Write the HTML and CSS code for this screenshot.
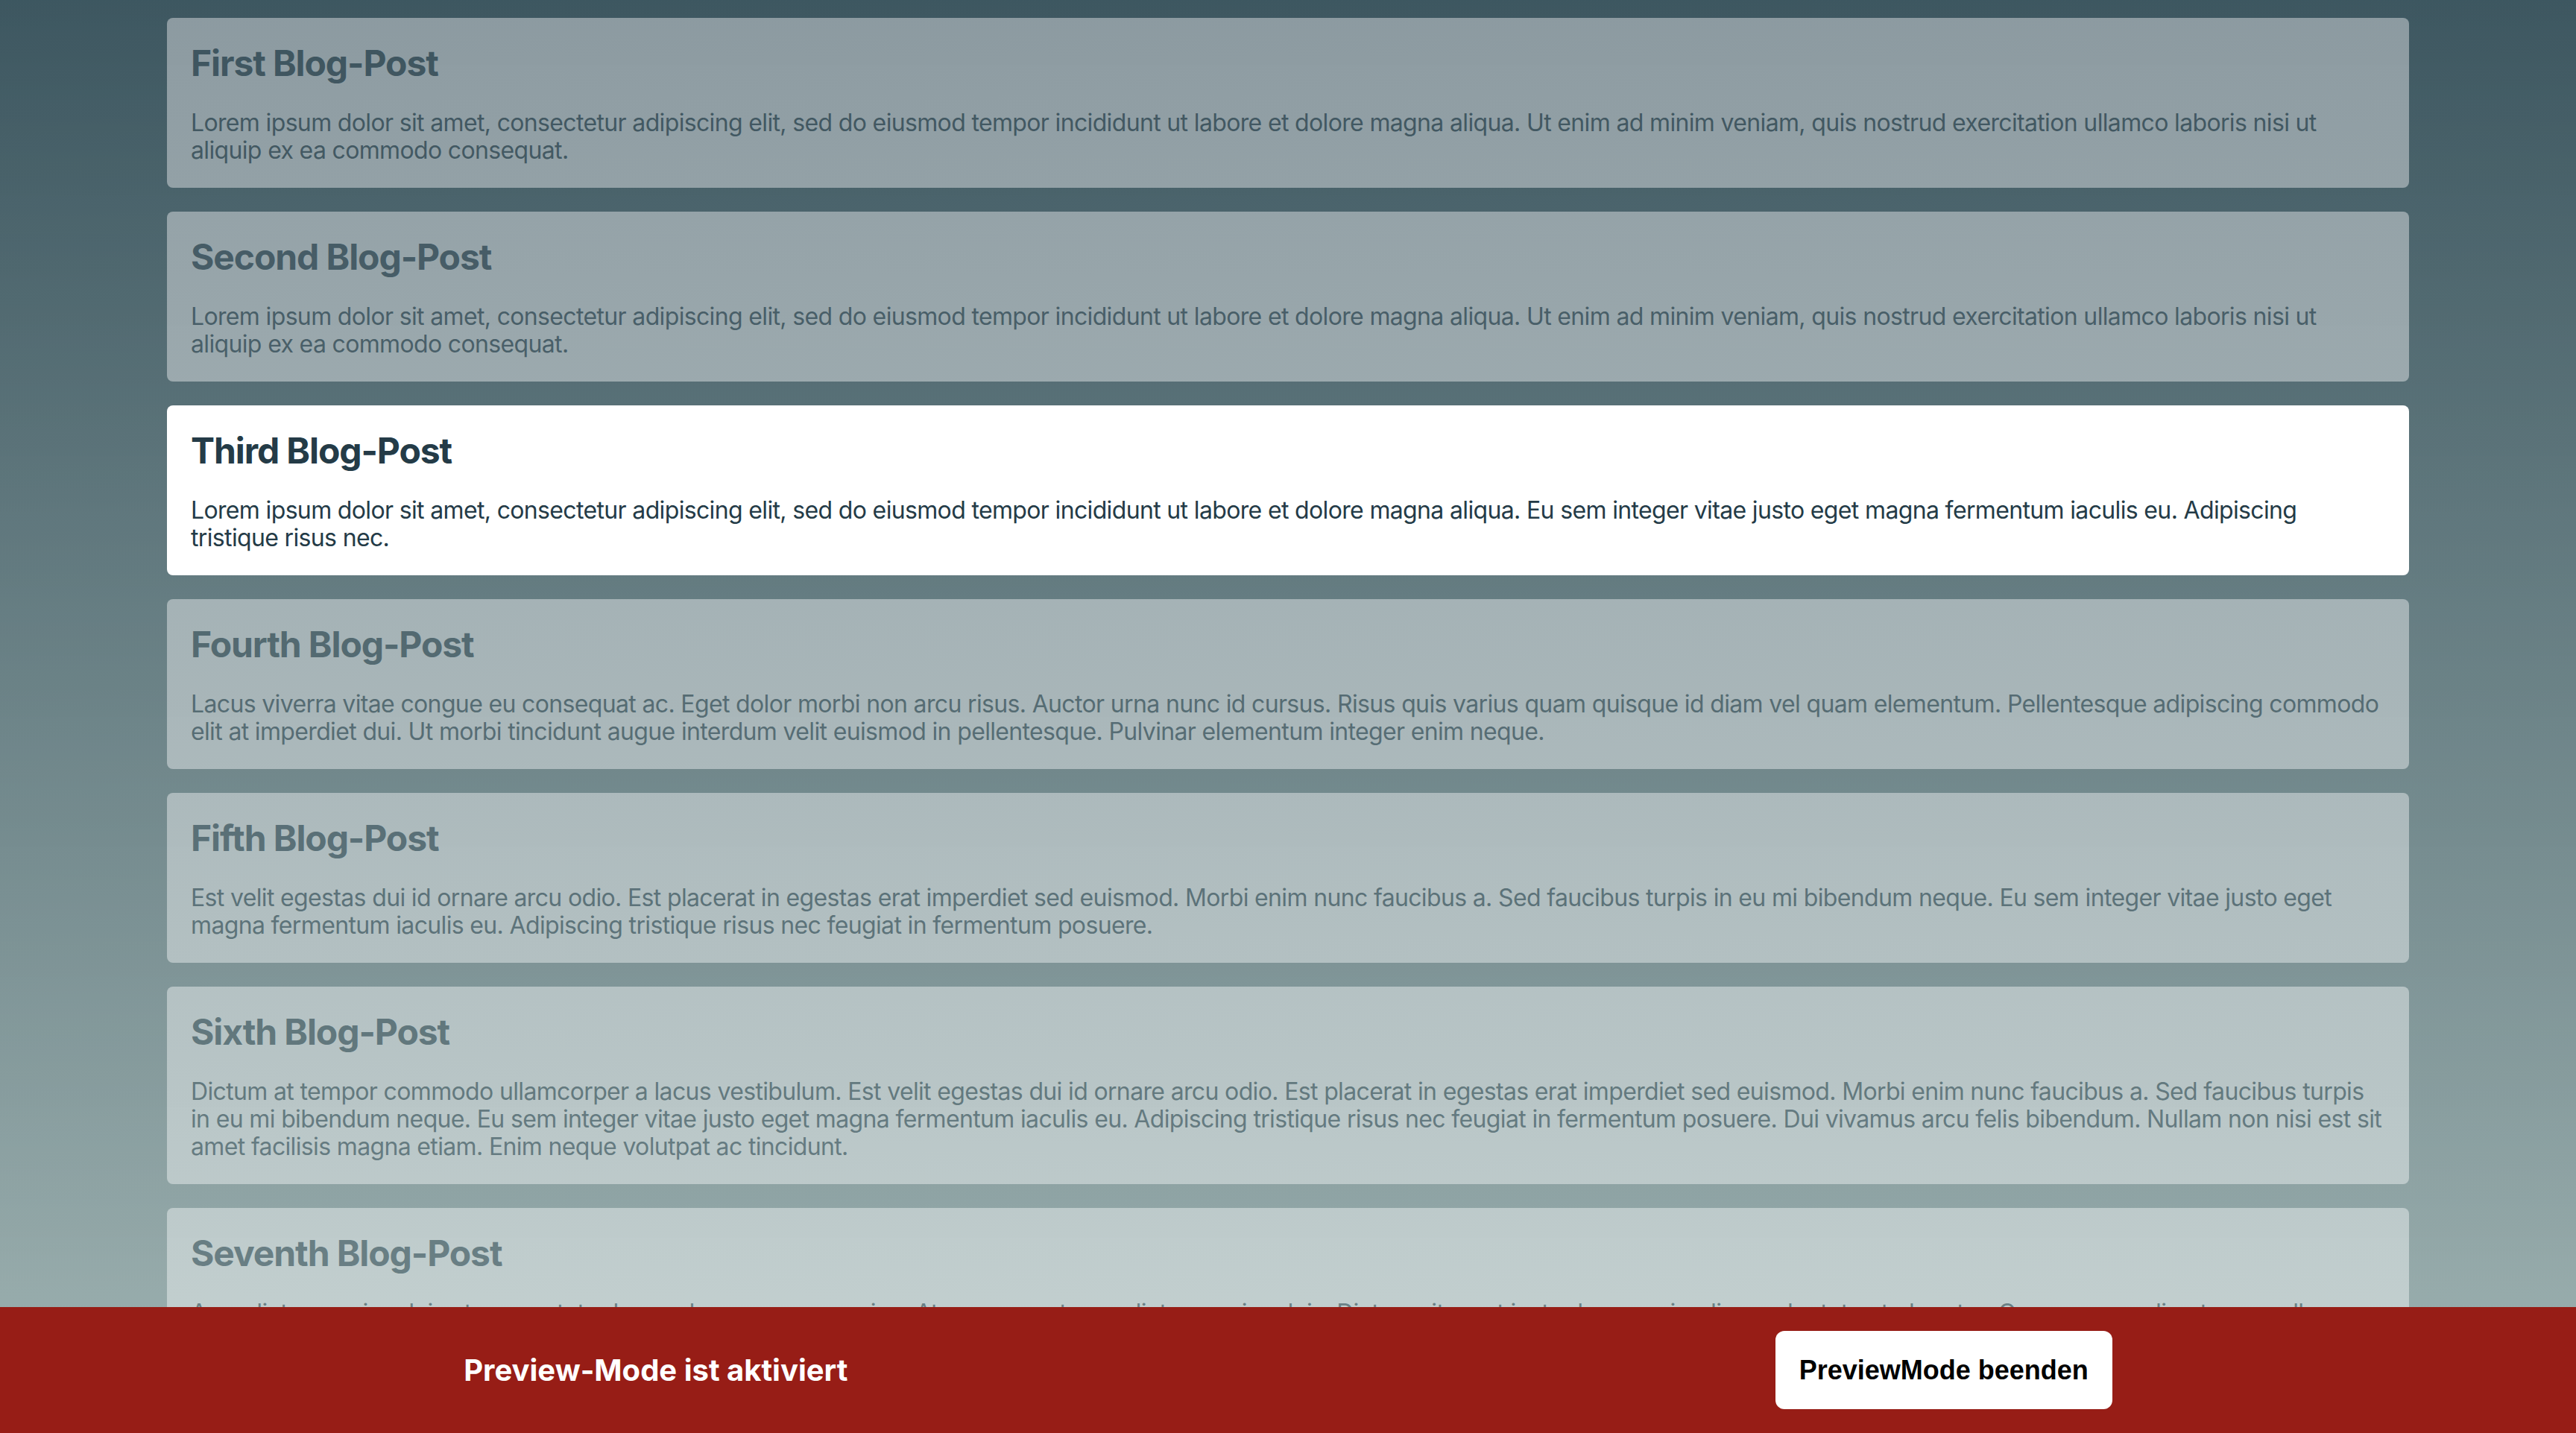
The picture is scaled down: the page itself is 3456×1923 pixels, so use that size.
FILE: index.html
```html
<!DOCTYPE html>
<html lang="de">
<head>
<meta charset="utf-8">
<title>Blog Preview</title>
<link rel="stylesheet" href="styles.css">
</head>
<body>
<main class="posts">
  <article class="post">
    <h2 class="post-title">First Blog-Post</h2>
    <p class="post-text">Lorem ipsum dolor sit amet, consectetur adipiscing elit, sed do eiusmod tempor incididunt ut labore et dolore magna aliqua. Ut enim ad minim veniam, quis nostrud exercitation ullamco laboris nisi ut aliquip ex ea commodo consequat.</p>
  </article>
  <article class="post">
    <h2 class="post-title">Second Blog-Post</h2>
    <p class="post-text">Lorem ipsum dolor sit amet, consectetur adipiscing elit, sed do eiusmod tempor incididunt ut labore et dolore magna aliqua. Ut enim ad minim veniam, quis nostrud exercitation ullamco laboris nisi ut aliquip ex ea commodo consequat.</p>
  </article>
  <article class="post post-active">
    <h2 class="post-title">Third Blog-Post</h2>
    <p class="post-text">Lorem ipsum dolor sit amet, consectetur adipiscing elit, sed do eiusmod tempor incididunt ut labore et dolore magna aliqua. Eu sem integer vitae justo eget magna fermentum iaculis eu. Adipiscing tristique risus nec.</p>
  </article>
  <article class="post">
    <h2 class="post-title">Fourth Blog-Post</h2>
    <p class="post-text">Lacus viverra vitae congue eu consequat ac. Eget dolor morbi non arcu risus. Auctor urna nunc id cursus. Risus quis varius quam quisque id diam vel quam elementum. Pellentesque adipiscing commodo elit at imperdiet dui. Ut morbi tincidunt augue interdum velit euismod in pellentesque. Pulvinar elementum integer enim neque.</p>
  </article>
  <article class="post">
    <h2 class="post-title">Fifth Blog-Post</h2>
    <p class="post-text">Est velit egestas dui id ornare arcu odio. Est placerat in egestas erat imperdiet sed euismod. Morbi enim nunc faucibus a. Sed faucibus turpis in eu mi bibendum neque. Eu sem integer vitae justo eget magna fermentum iaculis eu. Adipiscing tristique risus nec feugiat in fermentum posuere.</p>
  </article>
  <article class="post">
    <h2 class="post-title">Sixth Blog-Post</h2>
    <p class="post-text">Dictum at tempor commodo ullamcorper a lacus vestibulum. Est velit egestas dui id ornare arcu odio. Est placerat in egestas erat imperdiet sed euismod. Morbi enim nunc faucibus a. Sed faucibus turpis in eu mi bibendum neque. Eu sem integer vitae justo eget magna fermentum iaculis eu. Adipiscing tristique risus nec feugiat in fermentum posuere. Dui vivamus arcu felis bibendum. Nullam non nisi est sit amet facilisis magna etiam. Enim neque volutpat ac tincidunt.</p>
  </article>
  <article class="post">
    <h2 class="post-title">Seventh Blog-Post</h2>
    <p class="post-text">Arcu dictum varius duis at consectetur lorem donec massa sapien. At augue eget arcu dictum varius duis. Dictum sit amet justo donec enim diam vulputate ut pharetra. Ornare arcu odio ut sem nulla pharetra diam sit amet. Egestas dui id ornare arcu odio ut sem nulla pharetra diam sit amet nisl suscipit adipiscing.</p>
  </article>
</main>
<div class="dim"></div>
<footer class="preview-bar">
  <span class="preview-label">Preview-Mode ist aktiviert</span>
  <button class="preview-exit" type="button">PreviewMode beenden</button>
</footer>
</body>
</html>
```
FILE: styles.css
```css
html {
  background: linear-gradient(to bottom, #24444c 0%, #9fb1b0 100%) fixed;
  min-height: 100%;
}
body {
  margin: 0;
  font-family: Inter, "Noto Sans", sans-serif;
  color: #243b47;
}
.posts {
  display: flex;
  flex-direction: column;
  gap: 32px;
  padding: 24px 224px 200px;
}
.post {
  background: #ffffff;
  border-radius: 8px;
  padding: 32px;
}
.post-active {
  position: relative;
  z-index: 2;
}
.post-title {
  margin: 0;
  font-size: 48px;
  font-weight: 700;
  line-height: 58px;
  letter-spacing: -1.1px;
}
.post-text {
  margin: 32px 0 0;
  font-size: 32px;
  font-weight: 400;
  line-height: 37px;
  letter-spacing: -0.65px;
}
.dim {
  position: fixed;
  inset: 0;
  z-index: 1;
  background: linear-gradient(to bottom, rgba(76, 98, 108, 0.645) 0%, rgba(161, 182, 181, 0.6) 100%);
  pointer-events: none;
}
.preview-bar {
  position: fixed;
  left: 0;
  right: 0;
  bottom: 0;
  z-index: 3;
  display: flex;
  justify-content: space-around;
  align-items: center;
  padding: 32px 0;
  background: #971d16;
}
.preview-label {
  color: #ffffff;
  font-size: 40px;
  font-weight: 700;
}
.preview-exit {
  background: #ffffff;
  color: #000000;
  border: none;
  border-radius: 12px;
  padding: 32px;
  font-family: "Liberation Sans", Arial, sans-serif;
  font-size: 36px;
  font-weight: 700;
  line-height: 41px;
}
```
